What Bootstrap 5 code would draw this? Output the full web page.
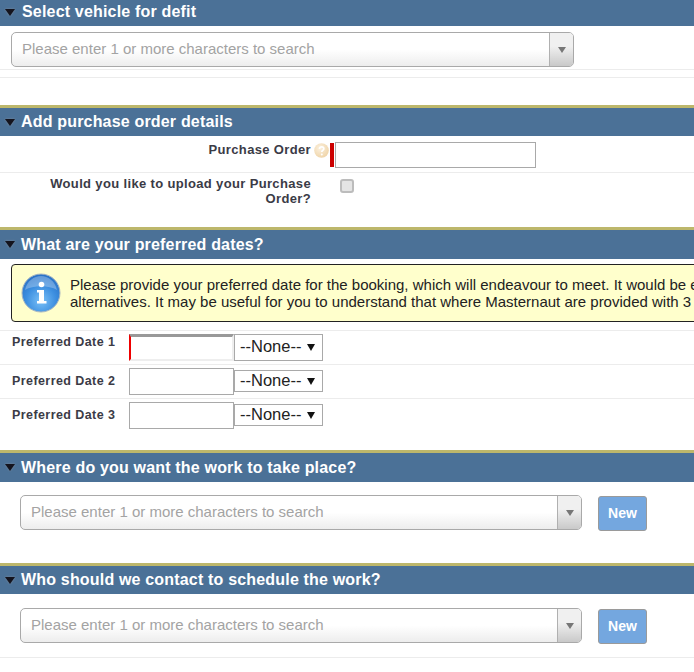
<!doctype html>
<html lang="en"><head><meta charset="utf-8"><title>Booking</title>
<link href="https://cdn.jsdelivr.net/npm/bootstrap@5.3.0/dist/css/bootstrap.min.css" rel="stylesheet">
<style>
html,body{height:672px;overflow:hidden;background:#fff}
body{font-family:"Liberation Sans",Arial,sans-serif;color:#333;width:694px}
.sec-head{height:28px;background:#4b7197;color:#fff;font-size:16px;letter-spacing:.18px;font-weight:700;border-top:3px solid #bdb76b;box-sizing:content-box;padding-left:5px;gap:6px}
.sec-head.first{height:24px;padding-bottom:2px;border-top:0;gap:7px}
.sec-head.tall{height:29px}
.tri{width:0;height:0;border-left:5px solid transparent;border-right:5px solid transparent;border-top:7px solid #14141e;filter:drop-shadow(0 0 1px #7a8a9c);flex:none}
.combo{height:35px;border:1px solid #a9a9a9;border-radius:5px;background:linear-gradient(#fff 50%,#ededed);font-size:15px;color:#a3a3a3;overflow:hidden}
.combo-v{width:563px;margin:6px 0 0 11px}
.combo-w{width:562px;margin:0}
.combo-txt{padding-left:10px}
.combo-arrow{width:24px;height:100%;border-left:1px solid #b0b0b0;background:linear-gradient(#f0f0f0 40%,#c9c9c9)}
.combo-arrow i{width:0;height:0;border-left:4px solid transparent;border-right:4px solid transparent;border-top:6px solid #777}
.rule{border-bottom:1px solid #ececec}
.rule-a{height:3px}
.rule-b{height:8px;margin-bottom:27px}
.po-row{height:37px}
.lbl{font-size:13px;letter-spacing:.35px;font-weight:700;color:#3b3b46;line-height:15px}
.po-lbl{width:280px;margin-left:31px;text-align:right;padding-top:6px}
.help{width:15px;height:15px;margin:7px 1px 0 3px;flex:none}
.req{width:4px;height:24px;background:#c00;margin:7px 1px 0 0}
.po-input{width:201px;height:26px;border:1px solid #a9a9a9;margin-top:6px;border-radius:0}
.up-row{height:54px}
.up-lbl{padding-top:3px}
.up-check.form-check-input{width:14px;height:14px;margin:6px 0 0 29px;background-color:#e4e4e4;border:2px solid #bcbcbc;border-radius:3px}
.note{width:860px;height:58px;margin:5px 0 8px 11px;background:#ffc;border:1px solid #222;border-radius:4px;font-size:15px;color:#222;line-height:17px;white-space:nowrap;padding-left:9px;gap:9px}
.note svg{flex:none}
.d-row{height:34px;padding-left:12px}
.d-lbl{width:117px;font-size:12.5px;letter-spacing:.42px;padding-top:4px}
.d-row.b .d-lbl,.d-row.c .d-lbl{padding-top:9px}
.d-input{width:105px;height:27px;border:1px solid #a9a9a9;border-radius:0;margin-top:3px}
.d-input.req-date{border-style:solid;border-width:3px 2px 2px 2px;border-color:#999 #eee #eee #e00}
.d-sel{appearance:none;width:89px;height:22px;font-size:16.5px;line-height:1;font-family:"Liberation Sans",Arial,sans-serif;border:1px solid #a9a9a9;border-radius:0;color:#222;margin-top:5px;padding:0 0 2px 5px;background:#fff url("data:image/svg+xml,%3Csvg xmlns='http://www.w3.org/2000/svg' width='8' height='7'%3E%3Cpath d='M0 0h8L4 7z' fill='%23111'/%3E%3C/svg%3E") no-repeat right 7px center}
.d-row.a .d-sel{height:27px;margin-top:3px}
.new-btn.btn{width:49px;height:35px;padding:0;background:#74a7df;border:1px solid #9a9a9a;border-radius:3px;color:#fff;font-size:14px;font-weight:700;margin-left:16px;margin-top:1px}
.wrap-w{padding:13px 0 32px 20px}
.wrap-x{padding:14px 0 13px 20px}
.d-last{margin-bottom:17px}
</style></head>
<body>
<section>
  <div class="sec-head first d-flex align-items-center"><span class="tri"></span><span>Select vehicle for defit</span></div>
  <div class="combo combo-v d-flex align-items-center justify-content-between"><span class="combo-txt">Please enter 1 or more characters to search</span><span class="combo-arrow d-flex align-items-center justify-content-center"><i></i></span></div>
  <div class="rule rule-a"></div>
  <div class="rule rule-b"></div>
</section>
<section>
  <div class="sec-head d-flex align-items-center"><span class="tri"></span><span>Add purchase order details</span></div>
  <div class="po-row rule d-flex">
    <div class="lbl po-lbl">Purchase Order</div>
    <svg class="help" viewBox="0 0 15 15"><defs><radialGradient id="h1" cx=".4" cy=".35" r=".7"><stop offset="0" stop-color="#fbf1df"/><stop offset="1" stop-color="#efd3a6"/></radialGradient></defs><circle cx="7.5" cy="7.5" r="7.3" fill="url(#h1)"/><path d="M5.4 5.8c.2-1.4 1.2-2 2.3-2 1.200 0 2.100.8 2.100 1.900 0 1.700-2 1.700-2 3.300" fill="none" stroke="#fff" stroke-width="1.700"/><circle cx="7.800" cy="11.400" r="1" fill="#fff"/></svg>
    <div class="req"></div>
    <input class="form-control po-input" type="text" aria-label="Purchase Order">
  </div>
  <div class="up-row d-flex">
    <div class="lbl po-lbl up-lbl">Would you like to upload your Purchase Order?</div>
    <input class="form-check-input up-check" type="checkbox" aria-label="Upload">
  </div>
</section>
<section>
  <div class="sec-head tall d-flex align-items-center"><span class="tri"></span><span>What are your preferred dates?</span></div>
  <div class="note d-flex align-items-center">
    <svg width="40" height="40" viewBox="0 0 40 40"><defs><radialGradient id="i1" cx=".5" cy=".7" r=".65"><stop offset="0" stop-color="#79c0f7"/><stop offset=".6" stop-color="#3d8fe0"/><stop offset="1" stop-color="#2b74c8"/></radialGradient></defs><circle cx="20" cy="20" r="19" fill="url(#i1)" stroke="#a9b7c2" stroke-width="1"/><path d="M4 17C6 8 13 3 20 3s14 5 16 14C28 12 12 12 4 17Z" fill="#fff" fill-opacity=".28"/><circle cx="20.500" cy="11.500" r="2.800" fill="#fff"/><path d="M16 17h7v11h2.500v2.500h-9.500V28H18v-8.500h-2Z" fill="#fff"/></svg>
    <div>Please provide your preferred date for the booking, which will endeavour to meet. It would be extremely helpful if you could also provide<br>alternatives. It may be useful for you to understand that where Masternaut are provided with 3 preferred dates this can help us</div>
  </div>
  <div class="rule"></div>
  <div class="d-row a rule d-flex" >
    <div class="lbl d-lbl">Preferred Date 1</div>
    <input class="form-control d-input req-date" type="text" aria-label="Preferred Date 1">
    <select class="d-sel" aria-label="Time 1"><option>--None--</option></select>
  </div>
  <div class="d-row b rule d-flex">
    <div class="lbl d-lbl">Preferred Date 2</div>
    <input class="form-control d-input" type="text" aria-label="Preferred Date 2">
    <select class="d-sel" aria-label="Time 2"><option>--None--</option></select>
  </div>
  <div class="d-row c d-flex d-last">
    <div class="lbl d-lbl">Preferred Date 3</div>
    <input class="form-control d-input" type="text" aria-label="Preferred Date 3">
    <select class="d-sel" aria-label="Time 3"><option>--None--</option></select>
  </div>
</section>
<section>
  <div class="sec-head tall d-flex align-items-center"><span class="tri"></span><span>Where do you want the work to take place?</span></div>
  <div class="wrap-w d-flex align-items-start">
    <div class="combo combo-w d-flex align-items-center justify-content-between"><span class="combo-txt">Please enter 1 or more characters to search</span><span class="combo-arrow d-flex align-items-center justify-content-center"><i></i></span></div>
    <button class="btn new-btn" type="button">New</button>
  </div>
</section>
<section>
  <div class="sec-head d-flex align-items-center"><span class="tri"></span><span>Who should we contact to schedule the work?</span></div>
  <div class="wrap-x rule d-flex align-items-start">
    <div class="combo combo-w d-flex align-items-center justify-content-between"><span class="combo-txt">Please enter 1 or more characters to search</span><span class="combo-arrow d-flex align-items-center justify-content-center"><i></i></span></div>
    <button class="btn new-btn" type="button">New</button>
  </div>
</section>
</body></html>
